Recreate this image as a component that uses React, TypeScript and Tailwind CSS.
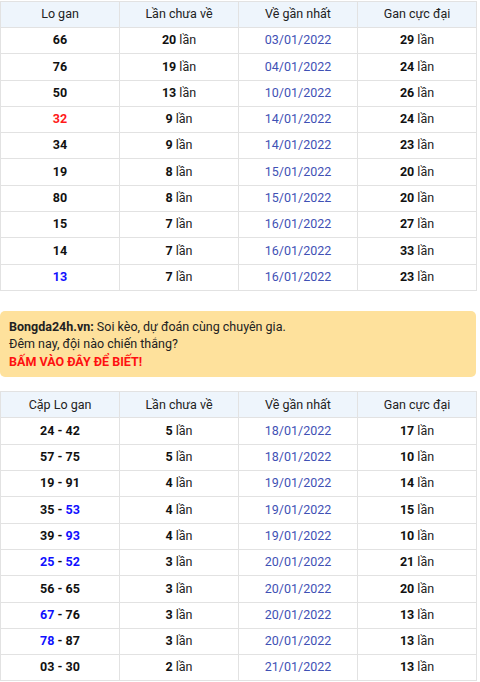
import React from "react";

type Part = { t: string; c?: "red" | "blue" };
type Row = { lo: Part[]; chua: string; ve: string; gan: string };

const t1: Row[] = [
  { lo: [{ t: "66" }], chua: "20", ve: "03/01/2022", gan: "29" },
  { lo: [{ t: "76" }], chua: "19", ve: "04/01/2022", gan: "24" },
  { lo: [{ t: "50" }], chua: "13", ve: "10/01/2022", gan: "26" },
  { lo: [{ t: "32", c: "red" }], chua: "9", ve: "14/01/2022", gan: "24" },
  { lo: [{ t: "34" }], chua: "9", ve: "14/01/2022", gan: "23" },
  { lo: [{ t: "19" }], chua: "8", ve: "15/01/2022", gan: "20" },
  { lo: [{ t: "80" }], chua: "8", ve: "15/01/2022", gan: "20" },
  { lo: [{ t: "15" }], chua: "7", ve: "16/01/2022", gan: "27" },
  { lo: [{ t: "14" }], chua: "7", ve: "16/01/2022", gan: "33" },
  { lo: [{ t: "13", c: "blue" }], chua: "7", ve: "16/01/2022", gan: "23" },
];

const t2: Row[] = [
  { lo: [{ t: "24" }, { t: " - " }, { t: "42" }], chua: "5", ve: "18/01/2022", gan: "17" },
  { lo: [{ t: "57" }, { t: " - " }, { t: "75" }], chua: "5", ve: "18/01/2022", gan: "10" },
  { lo: [{ t: "19" }, { t: " - " }, { t: "91" }], chua: "4", ve: "19/01/2022", gan: "14" },
  { lo: [{ t: "35" }, { t: " - " }, { t: "53", c: "blue" }], chua: "4", ve: "19/01/2022", gan: "15" },
  { lo: [{ t: "39" }, { t: " - " }, { t: "93", c: "blue" }], chua: "4", ve: "19/01/2022", gan: "10" },
  { lo: [{ t: "25", c: "blue" }, { t: " - " }, { t: "52", c: "blue" }], chua: "3", ve: "20/01/2022", gan: "21" },
  { lo: [{ t: "56" }, { t: " - " }, { t: "65" }], chua: "3", ve: "20/01/2022", gan: "20" },
  { lo: [{ t: "67", c: "blue" }, { t: " - " }, { t: "76" }], chua: "3", ve: "20/01/2022", gan: "13" },
  { lo: [{ t: "78", c: "blue" }, { t: " - " }, { t: "87" }], chua: "3", ve: "20/01/2022", gan: "13" },
  { lo: [{ t: "03" }, { t: " - " }, { t: "30" }], chua: "2", ve: "21/01/2022", gan: "13" },
];

function Table({ first, rows }: { first: string; rows: Row[] }) {
  const cell = "border border-[#e2e2e2] text-center p-0";
  return (
    <table className="w-[476px] border-collapse table-fixed text-[12.5px] text-[#222]">
      <thead>
        <tr className="h-[26px] bg-[#eef5fc]">
          <th className={`${cell} font-normal w-[119px]`}>{first}</th>
          <th className={`${cell} font-normal w-[119px]`}>Lần chưa về</th>
          <th className={`${cell} font-normal w-[119px]`}>Về gần nhất</th>
          <th className={`${cell} font-normal w-[119px]`}>Gan cực đại</th>
        </tr>
      </thead>
      <tbody>
        {rows.map((r, i) => (
          <tr key={i} className="h-[26.3px]">
            <td className={`${cell} font-bold text-[#111]`}>
              {r.lo.map((p, j) => (
                <span
                  key={j}
                  className={
                    p.c === "red" ? "text-[#ff1a1a]" : p.c === "blue" ? "text-[#1010ff]" : ""
                  }
                >
                  {p.t}
                </span>
              ))}
            </td>
            <td className={cell}>
              <span className="font-bold text-[#111]">{r.chua}</span> lần
            </td>
            <td className={`${cell} text-[#3f51b5]`}>{r.ve}</td>
            <td className={cell}>
              <span className="font-bold text-[#111]">{r.gan}</span> lần
            </td>
          </tr>
        ))}
      </tbody>
    </table>
  );
}

export default function App() {
  return (
    <div
      className="w-[480px] h-[682px] overflow-hidden bg-white pt-[1px]"
      style={{ fontFamily: "Roboto, 'Noto Sans', sans-serif" }}
    >
      <Table first="Lo gan" rows={t1} />
      <div className="mt-[20px] w-[476px] rounded-[5px] bg-[#fee19c] px-[9px] py-[7px] text-[12.5px] leading-[17.5px] text-[#222]">
        <div>
          <span className="font-bold">Bongda24h.vn:</span> Soi kèo, dự đoán cùng chuyên gia.
        </div>
        <div>Đêm nay, đội nào chiến thắng?</div>
        <div className="font-bold text-[#ff1010]">BẤM VÀO ĐÂY ĐỂ BIẾT!</div>
      </div>
      <div className="mt-[14px]">
        <Table first="Cặp Lo gan" rows={t2} />
      </div>
    </div>
  );
}
